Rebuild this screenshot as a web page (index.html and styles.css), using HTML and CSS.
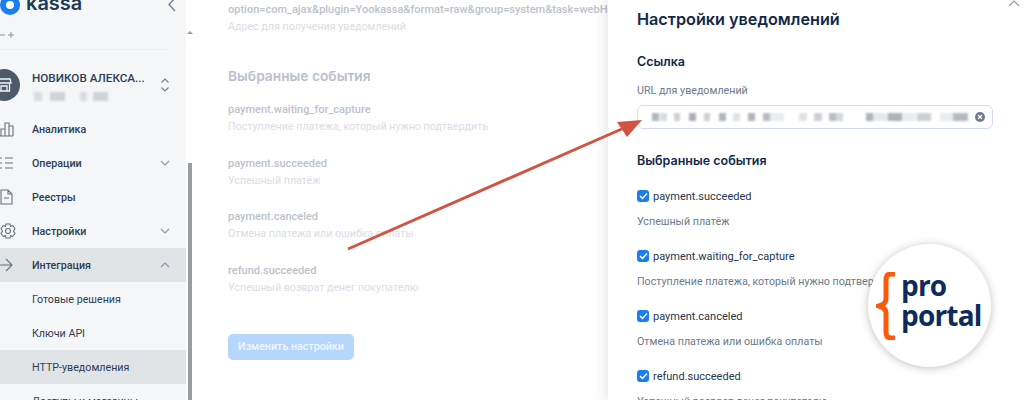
FILE: index.html
```html
<!DOCTYPE html>
<html lang="ru">
<head>
    <meta charset="UTF-8">
    <meta name="viewport" content="width=device-width, initial-scale=1.0">
    <title>Настройки уведомлений</title>
    <link rel="stylesheet" href="styles.css">
</head>
<body>

<div class="page">

    <!-- боковое меню -->
    <aside class="sidebar">
        <div class="brand">
            <span class="brand-mark"></span>
            <span class="brand-name">kassa</span>
            <svg class="brand-back" width="10" height="16" viewBox="0 0 10 16"><path d="M8 1 2 7.500 8 14" /></svg>
        </div>
        <div class="tools">
            <svg width="16" height="8" viewBox="0 0 16 8"><path d="M0 4H5M8 4H14M11 1V7" /></svg>
        </div>
        <div class="account">
            <span class="avatar">
                <svg width="16" height="16" viewBox="0 0 16 16"><path d="M2 2H14L15 6H1ZM2.500 7V14H13.500V7M5 9H11V14H5Z" /></svg>
            </span>
            <div class="account-text">
                <div class="account-name">НОВИКОВ АЛЕКСА...</div>
                <div class="account-id"></div>
            </div>
            <svg class="account-switch" width="10" height="16" viewBox="0 0 10 16"><path d="M1.500 5.500 5 2 8.500 5.500M1.500 10.500 5 14 8.500 10.500" /></svg>
        </div>
        <nav>
            <a class="nav-row">
                <svg class="nav-icon" width="16" height="16" viewBox="0 0 16 16"><path d="M1 15V8H5V15M5 15V2H9V15M9 15V5H13V15M0 15H13" /></svg>
                Аналитика
            </a>
            <a class="nav-row">
                <svg class="nav-icon" width="16" height="16" viewBox="0 0 16 16"><path d="M0 3H2M5 3H13M0 8H2M5 8H13M0 13H2M5 13H13" /></svg>
                Операции
                <svg class="nav-caret" width="10" height="6" viewBox="0 0 10 6"><path d="M1 1 5 5 9 1" /></svg>
            </a>
            <a class="nav-row">
                <svg class="nav-icon" width="16" height="16" viewBox="0 0 16 16"><path d="M1 1H8L12 5V15H1ZM8 1V5H12M4 9H9" /></svg>
                Реестры
            </a>
            <a class="nav-row">
                <svg class="nav-icon" width="16" height="16" viewBox="0 0 16 16"><path d="M6 1H10L10.500 3.500 12.500 2.500 15 5.500 13.500 8 15 10.500 12.500 13.500 10.500 12.500 10 15H6L5.500 12.500 3.500 13.500 1 10.500 2.500 8 1 5.500 3.500 2.500 5.500 3.500Z" /><circle cx="8" cy="8" r="2.500" /></svg>
                Настройки
                <svg class="nav-caret" width="10" height="6" viewBox="0 0 10 6"><path d="M1 1 5 5 9 1" /></svg>
            </a>
            <a class="nav-row is-open">
                <svg class="nav-icon" width="16" height="16" viewBox="0 0 16 16"><path d="M0 8H11M6 2 12 8 6 14" /></svg>
                Интеграция
                <svg class="nav-caret" width="10" height="6" viewBox="0 0 10 6"><path d="M1 5 5 1 9 5" /></svg>
            </a>
            <a class="nav-row nav-sub">Готовые решения</a>
            <a class="nav-row nav-sub">Ключи API</a>
            <a class="nav-row nav-sub is-open">HTTP-уведомления</a>
            <a class="nav-row nav-sub">Доступы и магазины</a>
        </nav>
    </aside>

    <div class="scroll-track">
        <span class="scroll-up"></span>
        <span class="scroll-thumb"></span>
    </div>

    <!-- страница за шторкой -->
    <main class="content">
        <div class="field-value">option=com_ajax&amp;plugin=Yookassa&amp;format=raw&amp;group=system&amp;task=webHook</div>
        <div class="field-hint">Адрес для получения уведомлений</div>

        <h3>Выбранные события</h3>

        <div class="event">
            <div class="field-value">payment.waiting_for_capture</div>
            <div class="field-hint">Поступление платежа, который нужно подтвердить</div>
        </div>
        <div class="event">
            <div class="field-value">payment.succeeded</div>
            <div class="field-hint">Успешный платёж</div>
        </div>
        <div class="event">
            <div class="field-value">payment.canceled</div>
            <div class="field-hint">Отмена платежа или ошибка оплаты</div>
        </div>
        <div class="event">
            <div class="field-value">refund.succeeded</div>
            <div class="field-hint">Успешный возврат денег покупателю</div>
        </div>

        <button type="button" class="edit-btn">Изменить настройки</button>
    </main>

    <!-- шторка -->
    <section class="drawer">
        <svg class="drawer-close" width="12" height="6" viewBox="0 0 12 6"><path d="M1 6 6 1 11 6" /></svg>
        <h2>Настройки уведомлений</h2>
        <h4>Ссылка</h4>
        <label class="url-label">URL для уведомлений</label>
        <div class="url-input">
            <span class="url-blur"></span>
            <span class="url-clear">
                <svg width="6" height="6" viewBox="0 0 6 6"><path d="M1 1 5 5M5 1 1 5" /></svg>
            </span>
        </div>
        <h4 class="events-title">Выбранные события</h4>

        <div class="check-block">
            <div class="check-row">
                <span class="check"><svg width="9" height="8" viewBox="0 0 9 8"><path d="M1 4 3.500 6.500 8 1.500" /></svg></span>
                payment.succeeded
            </div>
            <div class="check-hint">Успешный платёж</div>
        </div>
        <div class="check-block">
            <div class="check-row">
                <span class="check"><svg width="9" height="8" viewBox="0 0 9 8"><path d="M1 4 3.500 6.500 8 1.500" /></svg></span>
                payment.waiting_for_capture
            </div>
            <div class="check-hint">Поступление платежа, который нужно подтвердить</div>
        </div>
        <div class="check-block">
            <div class="check-row">
                <span class="check"><svg width="9" height="8" viewBox="0 0 9 8"><path d="M1 4 3.500 6.500 8 1.500" /></svg></span>
                payment.canceled
            </div>
            <div class="check-hint">Отмена платежа или ошибка оплаты</div>
        </div>
        <div class="check-block">
            <div class="check-row">
                <span class="check"><svg width="9" height="8" viewBox="0 0 9 8"><path d="M1 4 3.500 6.500 8 1.500" /></svg></span>
                refund.succeeded
            </div>
            <div class="check-hint">Успешный возврат денег покупателю</div>
        </div>
    </section>

    <!-- стрелка поверх скриншота -->
    <svg class="arrow" width="1024" height="400" viewBox="0 0 1024 400">
        <path class="arrow-line" d="M348 249 624 128" />
        <path class="arrow-head" d="M642 120 617 122 627 137Z" />
    </svg>

    <!-- значок proportal -->
    <div class="badge">
        <svg class="badge-brace" width="20" height="68" viewBox="0 0 20 68"><path d="M19 2H15Q10 2 10 8V27Q10 32 3 34Q10 36 10 41V60Q10 66 15 66H19" /></svg>
        <div class="badge-text">pro<br>portal</div>
    </div>

</div>

</body>
</html>
```

FILE: styles.css
```css
* {
    box-sizing: border-box;
}

body {
    margin: 0;
    font-family: 'Roboto', 'Noto Sans', Arial, sans-serif;
    background: #fff;
    overflow: hidden;
}

.page {
    position: relative;
    display: flex;
    width: 1024px;
    height: 400px;
    overflow: hidden;
}

svg path, svg circle {
    fill: none;
}

/* боковое меню */
.sidebar {
    width: 186px;
    flex-shrink: 0;
    background: #f5f6f8;
    color: #2c3e55;
}

.brand {
    display: flex;
    align-items: center;
    height: 10px;
    position: relative;
}

.brand-mark {
    width: 20px;
    height: 20px;
    margin: -1px 6px 0 0;
    border: 6px solid #1a7df0;
    border-radius: 50%;
    background: #fff;
    flex-shrink: 0;
}

.brand-name {
    margin-top: -4px;
    font-family: 'Inter', sans-serif;
    font-size: 20px;
    font-weight: 600;
    line-height: 10px;
    color: #1f3a52;
}

.brand-back {
    margin-left: auto;
    margin-right: 9px;
}

.brand-back path {
    stroke: #7c8896;
    stroke-width: 1.500;
}

.tools {
    height: 40px;
    border-bottom: 1px solid #eaecef;
    margin-right: 17px;
    padding-top: 14px;
}

.tools svg path {
    stroke: #8b95a1;
}

.account {
    display: flex;
    align-items: center;
    height: 62px;
    padding-top: 8px;
}

.avatar {
    width: 32px;
    height: 32px;
    margin-left: -12px;
    margin-right: 12px;
    border-radius: 50%;
    background: #4d5a6c;
    display: flex;
    align-items: center;
    justify-content: center;
    flex-shrink: 0;
}

.avatar path {
    stroke: #f5f6f8;
    stroke-width: 1.300;
}

.account-name {
    font-size: 11.700px;
    font-weight: 500;
    line-height: 16px;
    white-space: nowrap;
}

.account-id {
    width: 74px;
    height: 9px;
    margin: 6px 0 0 2px;
    filter: blur(1px);
    background: linear-gradient(to right, #d8dbe0 0 11%, transparent 11% 22%, #cfd3d8 22% 42%, transparent 42% 62%, #d8dbe0 62% 72%, transparent 72% 80%, #cfd3d8 80% 100%);
}

.account-switch {
    margin-left: auto;
    margin-right: 16px;
}

.account-switch path {
    stroke: #76828f;
    stroke-width: 1.200;
}

.nav-row {
    display: flex;
    align-items: center;
    height: 34px;
    font-size: 10.700px;
    font-weight: 500;
    white-space: nowrap;
}

.nav-row.is-open {
    background: #e1e4e7;
}

.nav-sub {
    padding-left: 32px;
    font-weight: 400;
}

.nav-icon {
    margin-right: 16px;
    flex-shrink: 0;
}

.nav-icon path, .nav-icon circle {
    stroke: #66727f;
    stroke-width: 1.100;
}

.nav-caret {
    margin-left: auto;
    margin-right: 16px;
}

.nav-caret path {
    stroke: #8f99a4;
    stroke-width: 1.100;
}

.scroll-track {
    position: relative;
    width: 7px;
    flex-shrink: 0;
    background: #fff;
    margin-top: 28px;
    display: flex;
    flex-direction: column;
    align-items: center;
}

.scroll-up {
    margin-top: 3px;
    border-left: 3px solid transparent;
    border-right: 3px solid transparent;
    border-bottom: 3px solid #9a9da1;
}

.scroll-thumb {
    width: 4px;
    margin-top: 129px;
    flex: 1;
    background: #9a9ca0;
}

/* страница за шторкой */
.content {
    width: 415px;
    flex-shrink: 0;
    padding: 1px 0 0 35px;
    white-space: nowrap;
    overflow: hidden;
    background: #fff;
}

.field-value {
    font-size: 11px;
    font-weight: 500;
    line-height: 17px;
    color: #bcc3cb;
}

.field-hint {
    font-size: 10.700px;
    line-height: 17px;
    color: #dadee3;
}

h3 {
    margin: 29px 0 13px;
    font-family: 'Inter', sans-serif;
    font-size: 13.750px;
    font-weight: 600;
    line-height: 24px;
    color: #b9c0c9;
}

.event {
    height: 53.700px;
}

.edit-btn {
    display: block;
    width: 126px;
    height: 26px;
    margin-top: 18px;
    padding: 0;
    border: none;
    border-radius: 5px;
    background: #b7d6fb;
    color: #f0f6fe;
    font-family: inherit;
    font-size: 10.700px;
    font-weight: 500;
}

/* шторка */
.drawer {
    position: relative;
    flex: 1;
    padding: 0 31px 0 29px;
    background: #fff;
    box-shadow: -4px 0 10px rgba(40, 50, 70, 0.1);
    white-space: nowrap;
    overflow: hidden;
    color: #12294a;
}

.drawer-close {
    position: absolute;
    top: 0;
    right: 4px;
}

.drawer-close path {
    stroke: #8f99a4;
    stroke-width: 1.200;
}

h2 {
    margin: 8px 0 0;
    font-family: 'Inter', sans-serif;
    font-size: 16.200px;
    font-weight: 600;
    line-height: 22px;
}

h4 {
    margin: 23px 0 0;
    font-family: 'Inter', sans-serif;
    font-size: 12.500px;
    font-weight: 600;
    line-height: 18px;
}

.url-label {
    display: block;
    margin-top: 12px;
    font-size: 10.700px;
    line-height: 16px;
    color: #6d7a89;
}

.url-input {
    display: flex;
    align-items: center;
    justify-content: space-between;
    height: 24px;
    margin-top: 6px;
    padding: 0 7px 0 14px;
    border: 1px solid #d3dcee;
    border-radius: 6px;
}

.url-blur {
    width: 316px;
    height: 8px;
    filter: blur(0.8px);
    background: linear-gradient(to right,
        #b0b5bc 0 2.100%, transparent 2.100% 2.600%, #d8dbdf 2.600% 4.800%, transparent 4.800% 6.900%,
        #ccd0d5 6.900% 9%, transparent 9% 11.600%, #a9afb7 11.600% 14%, transparent 14% 16.400%,
        #ccd0d5 16.400% 18.500%, transparent 18.500% 21.200%, #b0b5bc 21.200% 23.300%, transparent 23.300% 25.600%,
        #dfe2e5 25.600% 27.700%, transparent 27.700% 30.400%, #b0b5bc 30.400% 32.500%, transparent 32.500% 35.100%,
        #b8bdc3 35.100% 37.200%, #eaecee 37.200% 41.800%, transparent 41.800% 46.600%, #dfe2e5 46.600% 48.900%,
        transparent 48.900% 51.300%, #ccd0d5 51.300% 53.700%, transparent 53.700% 56%, #b8bdc3 56% 58.200%,
        #d4d7db 58.200% 60.300%, transparent 60.300% 67.700%, #aeb3ba 67.700% 69.800%, #e6e8eb 69.800% 74.600%,
        #aeb3ba 74.600% 79.200%, #eaecee 79.200% 83.600%, transparent 83.600% 83.900%, #ccd0d5 83.900% 88.400%,
        transparent 88.400% 91%, #eaecee 91% 95.200%, transparent 95.200% 95.400%, #b4b9c0 95.400% 100%);
}

.url-clear {
    display: flex;
    align-items: center;
    justify-content: center;
    width: 10px;
    height: 10px;
    border-radius: 50%;
    background: #6d7a89;
}

.url-clear path {
    stroke: #fff;
    stroke-width: 1.200;
}

.events-title {
    margin-top: 23px;
}

.check-block {
    height: 60px;
}

.events-title + .check-block {
    margin-top: 18px;
}

.check-row {
    display: flex;
    align-items: center;
    gap: 4px;
    height: 16px;
    font-size: 11px;
    color: #26364d;
}

.check {
    display: flex;
    align-items: center;
    justify-content: center;
    width: 12px;
    height: 12px;
    border-radius: 3px;
    background: #1a7df0;
}

.check path {
    stroke: #fff;
    stroke-width: 1.500;
}

.check-hint {
    margin-top: 10px;
    font-size: 10.700px;
    line-height: 16px;
    color: #6d7a89;
}

/* стрелка */
.arrow {
    position: absolute;
    top: 0;
    left: 0;
    pointer-events: none;
}

.arrow-line {
    stroke: #d15443;
    stroke-width: 3;
}

.arrow-head {
    fill: #d15443;
}

/* значок */
.badge {
    position: absolute;
    left: 868px;
    top: 244px;
    width: 123px;
    height: 123px;
    display: flex;
    align-items: center;
    border-radius: 50%;
    background: #fff;
    box-shadow: 0 1px 8px rgba(0, 0, 0, 0.25);
}

.badge-brace {
    margin-left: 8px;
    flex-shrink: 0;
}

.badge-brace path {
    stroke: #fb5a0c;
    stroke-width: 5;
}

.badge-text {
    margin: -11px 0 0 5px;
    font-family: 'Open Sans', 'Noto Sans', sans-serif;
    font-size: 28px;
    font-weight: 700;
    line-height: 30px;
    color: #0d2b5c;
    letter-spacing: -0.8px;
}
```
